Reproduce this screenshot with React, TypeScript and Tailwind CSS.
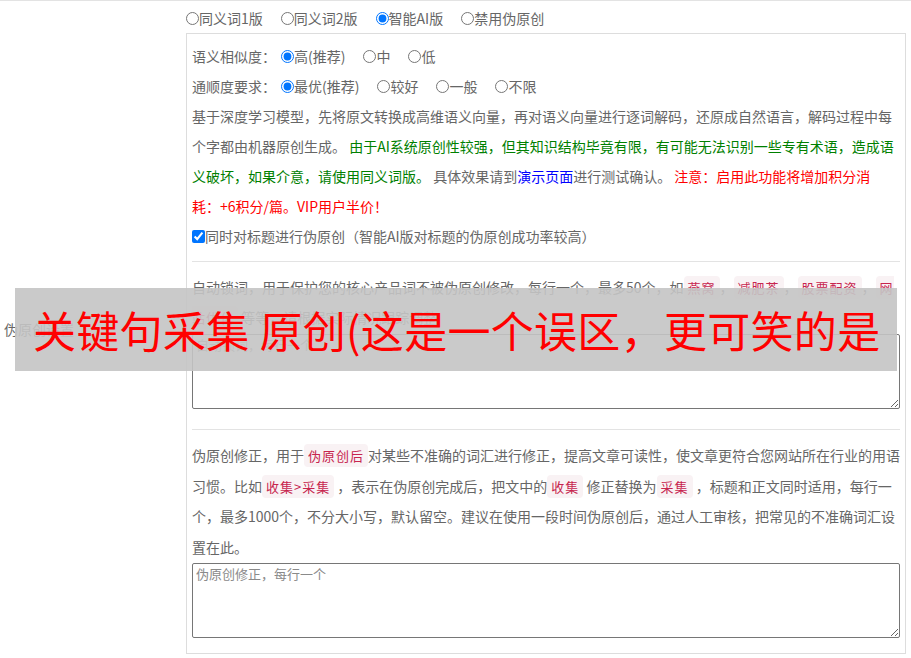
import React from 'react';

const Radio = ({ name, label, checked }: { name: string; label: string; checked?: boolean }) => (
  <label className="inline-flex items-center mr-[18px]">
    <input type="radio" name={name} defaultChecked={checked} className="m-0 w-[13px] h-[13px] accent-[#0075ff]" />
    <span>{label}</span>
  </label>
);

const Tag = ({ children }: { children: React.ReactNode }) => (
  <span className="px-1 py-[2px] rounded bg-[#f9f2f4] text-[#c7254e] text-[13px] leading-none tracking-[1px]">{children}</span>
);

export default function App() {
  return (
    <div className="relative w-[911px] h-[658px] overflow-hidden bg-white border-t border-[#e3e3e3] font-['Noto_Sans_CJK_SC',sans-serif] text-[14px] text-[#666] [text-spacing-trim:space-all]">
      <div className="flex">
        {/* left label */}
        <div className="w-[186px] flex items-center pl-1 pt-1 shrink-0">伪原创设置</div>

        <div className="w-[720px] pt-[2px]">
          {/* mode */}
          <div className="h-[30px] flex items-center">
            <Radio name="mode" label="同义词1版" />
            <Radio name="mode" label="同义词2版" />
            <Radio name="mode" label="智能AI版" checked />
            <Radio name="mode" label="禁用伪原创" />
          </div>

          <div className="border border-[#ddd] px-[5px] pt-[7px] pb-[15px] leading-[30px]">
            <div className="flex items-center h-[30px]">
              <span className="mr-[5px]">语义相似度：</span>
              <Radio name="sim" label="高(推荐)" checked />
              <Radio name="sim" label="中" />
              <Radio name="sim" label="低" />
            </div>
            <div className="flex items-center h-[30px]">
              <span className="mr-[5px]">通顺度要求：</span>
              <Radio name="flu" label="最优(推荐)" checked />
              <Radio name="flu" label="较好" />
              <Radio name="flu" label="一般" />
              <Radio name="flu" label="不限" />
            </div>
            <p>
              基于深度学习模型，先将原文转换成高维语义向量，再对语义向量进行逐词解码，还原成自然语言，解码过程中每个字都由机器原创生成。{' '}
              <span className="text-[#008000]">
                由于AI系统原创性较强，但其知识结构毕竟有限，有可能无法识别一些专有术语，造成语义破坏，如果介意，请使用同义词版。
              </span>{' '}
              具体效果请到<a className="text-[#0000ff]">演示页面</a>进行测试确认。{' '}
              <span className="text-[#ff0000]">
                注意：启用此功能将增加积分消
                <br />
                耗：+6积分/篇。VIP用户半价！
              </span>
            </p>
            <label className="flex items-center h-[30px]">
              <input type="checkbox" defaultChecked className="m-0 w-[13px] h-[13px] accent-[#0075ff]" />
              <span>同时对标题进行伪原创（智能AI版对标题的伪原创成功率较高）</span>
            </label>

            <div className="h-px bg-[#e3e3e3] my-[10px]" />

            <p>
              自动锁词，用于保护您的核心产品词不被伪原创修改，每行一个，最多50个，如<Tag>燕窝</Tag>，<Tag>减肥茶</Tag>，<Tag>股票配资</Tag>，<Tag>网站优化</Tag> 等等，请根据实际情况跟踪调整
            </p>
            <textarea
              placeholder="自动锁词，每行一个"
              className="block mt-[2px] mb-[20px] w-[708px] h-[75px] border border-[#767676] rounded-[2px] px-[3px] py-[1px] text-[13px] leading-[18px] placeholder:text-[#8a8a8a]"
            />

            <div className="h-px bg-[#e3e3e3] mb-[10px]" />

            <p className="leading-[30.5px]">
              伪原创修正，用于<Tag>伪原创后</Tag>对某些不准确的词汇进行修正，提高文章可读性，使文章更符合您网站所在行业的用语习惯。比如<Tag>收集&gt;采集</Tag> ，表示在伪原创完成后，把文中的<Tag>收集</Tag> 修正替换为<Tag>采集</Tag> ，标题和正文同时适用，每行一个，最多1000个，不分大小写，默认留空。建议在使用一段时间伪原创后，通过人工审核，把常见的不准确词汇设置在此。
            </p>
            <textarea
              placeholder="伪原创修正，每行一个"
              className="block mt-[1px] w-[708px] h-[75px] border border-[#767676] rounded-[2px] px-[3px] py-[1px] text-[13px] leading-[18px] placeholder:text-[#8a8a8a]"
            />
          </div>
        </div>
      </div>

      {/* overlay caption */}
      <div className="absolute left-[15px] top-[287px] w-[882px] h-[83px] bg-[#c4c4c4]/90 flex items-center pl-[18px] overflow-hidden">
        <span className="text-[#ff0000] text-[43px] tracking-[0.3px] leading-none whitespace-nowrap">关键句采集 原创(这是一个误区，更可笑的是</span>
      </div>
    </div>
  );
}
